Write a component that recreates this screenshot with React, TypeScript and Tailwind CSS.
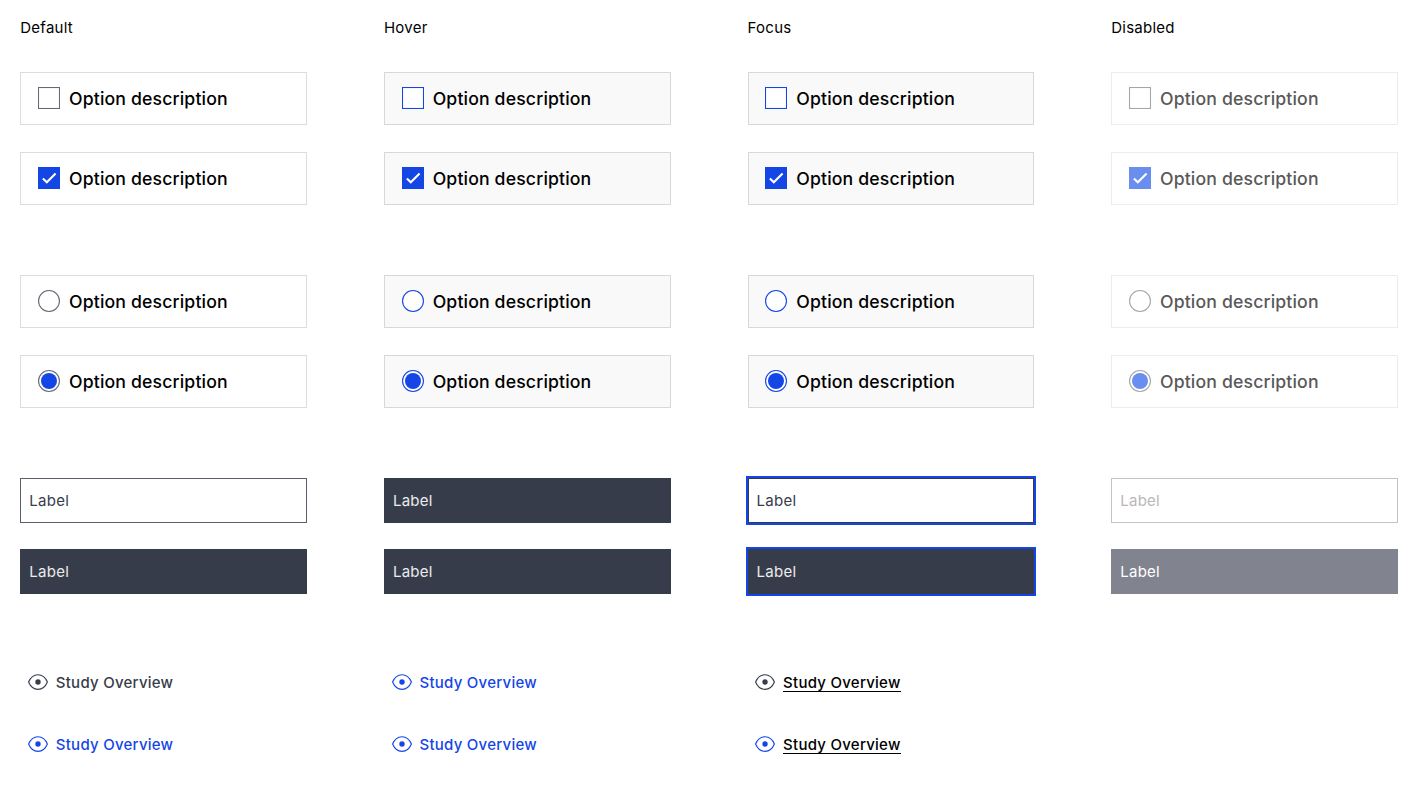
type State = "default" | "hover" | "focus" | "disabled";

const states: { id: State; title: string }[] = [
  { id: "default", title: "Default" },
  { id: "hover", title: "Hover" },
  { id: "focus", title: "Focus" },
  { id: "disabled", title: "Disabled" },
];

function Control({ kind, checked, state }: { kind: "checkbox" | "radio"; checked: boolean; state: State }) {
  const active = state === "hover" || state === "focus";
  const stroke = active ? "#1446e6" : state === "disabled" ? "#a3a5ab" : "#646975";
  const fill = state === "disabled" ? "#698ef0" : "#1446e6";
  return (
    <svg className="mb-px size-[22px] shrink-0" viewBox="0 0 22 22" fill="none">
      {kind === "checkbox" && !checked && (
        <rect x="0.5" y="0.5" width="21" height="21" fill="#fff" stroke={stroke} strokeWidth="1.1" />
      )}
      {kind === "checkbox" && checked && (
        <>
          <rect width="22" height="22" fill={fill} />
          <path d="M4.9 11.4 8.8 15.3 17.6 6.5" stroke="#fff" strokeWidth="2.1" />
        </>
      )}
      {kind === "radio" && (
        <>
          <circle cx="11" cy="11" r="10.45" fill="#fff" stroke={stroke} strokeWidth="1.1" />
          {checked && <circle cx="11" cy="11" r="8" fill={fill} />}
        </>
      )}
    </svg>
  );
}

function Option({ kind, checked = false, state }: { kind: "checkbox" | "radio"; checked?: boolean; state: State }) {
  const look = {
    default: "border-[#dddddd] bg-white text-black",
    hover: "border-[#d8d8d8] bg-[#f9f9f9] text-black",
    focus: "border-[#d8d8d8] bg-[#f9f9f9] text-black",
    disabled: "border-[#ececec] bg-white text-[#595959]",
  }[state];
  return (
    <div
      className={`flex h-[53px] items-center gap-[9px] border pl-[16.7px] text-[17.67px] font-medium tracking-[0.15px] ${look}`}
    >
      <Control kind={kind} checked={checked} state={state} />
      <span className="leading-[26px] whitespace-nowrap">Option description</span>
    </div>
  );
}

function Field({ filled = false, state }: { filled?: boolean; state: State }) {
  const outlined = {
    default: "border-[#5b5f6b] text-[#373c4a]",
    hover: "border-[#373c4a] bg-[#373c4a] text-white/90",
    focus: "border-[#373c4a] text-[#373c4a] outline-2 outline-[#1446e6]",
    disabled: "border-[#c4c4c4] text-[#b8b8b8]",
  }[state];
  const solid = {
    default: "border-[#373c4a] bg-[#373c4a] text-white/90",
    hover: "border-[#373c4a] bg-[#373c4a] text-white/90",
    focus: "border-[#373c4a] bg-[#373c4a] text-white/90 outline-2 outline-[#1446e6]",
    disabled: "border-[#81848e] bg-[#81848e] text-white",
  }[state];
  return (
    <div className={`flex h-[45px] items-center border pt-px pl-2 text-[15px] leading-5 tracking-[0.25px] ${filled ? solid : outlined}`}>
      Label
    </div>
  );
}

function StudyLink({ selected = false, state }: { selected?: boolean; state: State }) {
  const icon = selected || state === "hover" ? "text-[#1446e6]" : "text-[#373c4a]";
  const text = state === "focus" ? "border-black text-black" : `${icon} border-transparent`;
  return (
    <div className="flex h-6 items-center gap-[7.8px] pl-[7.7px]">
      <svg className={`h-4 w-5 shrink-0 ${icon}`} viewBox="0 0 20 16" fill="none">
        <path
          d="M.6 8C2.6 3.2 6 .7 10 .7S17.4 3.2 19.4 8C17.4 12.8 14 15.3 10 15.3S2.6 12.8.6 8Z"
          stroke="currentColor"
          strokeWidth="1.15"
          strokeLinejoin="round"
        />
        <circle cx="10" cy="8" r="2.7" fill="currentColor" />
      </svg>
      <span className={`border-b pt-px text-[15px] leading-[17px] font-medium tracking-[0.26px] whitespace-nowrap ${text}`}>
        Study Overview
      </span>
    </div>
  );
}

export default function App() {
  return (
    <main className="grid h-[789px] w-[1427px] grid-cols-[repeat(4,286.67px)] gap-x-[77px] bg-white pt-[18px] pl-[20.3px] font-['Inter',sans-serif]">
      {states.map(({ id, title }) => (
        <section key={id} className="flex flex-col">
          <h2 className="text-[15px] leading-5 tracking-[0.24px] text-black">{title}</h2>
          <div className="mt-[34px] flex flex-col gap-[27px]">
            <Option kind="checkbox" state={id} />
            <Option kind="checkbox" checked state={id} />
          </div>
          <div className="mt-[70px] flex flex-col gap-[27px]">
            <Option kind="radio" state={id} />
            <Option kind="radio" checked state={id} />
          </div>
          <div className="mt-[70px] flex flex-col gap-[26px]">
            <Field state={id} />
            <Field filled state={id} />
          </div>
          {id !== "disabled" && (
            <div className="mt-[76px] flex flex-col gap-[38px]">
              <StudyLink state={id} />
              <StudyLink selected state={id} />
            </div>
          )}
        </section>
      ))}
    </main>
  );
}
